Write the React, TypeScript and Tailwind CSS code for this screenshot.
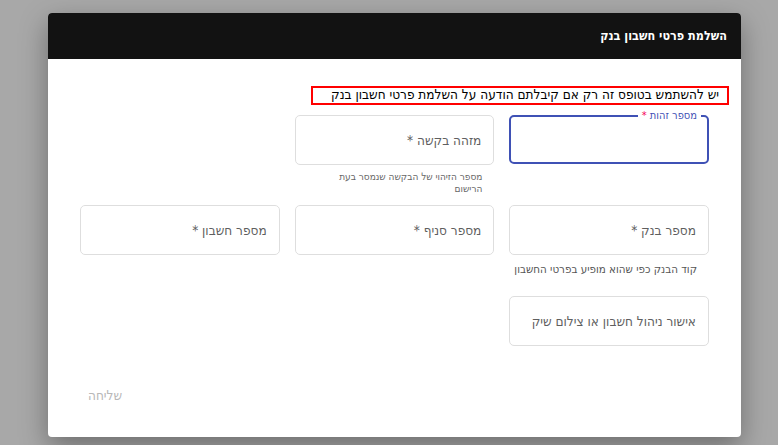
const COND = { fontFamily: '"DejaVu Sans Condensed", "Liberation Sans", sans-serif' };

type FieldProps = {
  label: string;
  helper?: string;
  wrapHelper?: boolean;
};

function IdField() {
  return (
    <div className="relative h-[49px] rounded-[5px] border-2 border-[#3f51b5]">
      <span
        style={COND}
        className="absolute -top-[8px] right-[6px] bg-white px-[4px] text-[11px] leading-[13px] text-[#3f51b5]"
      >
        מספר זהות <span className="text-[#f50057]">*</span>
      </span>
    </div>
  );
}

function Field({ label, helper, wrapHelper }: FieldProps) {
  return (
    <div className="flex flex-col">
      <div
        style={COND}
        className="flex h-[50px] items-center whitespace-nowrap rounded-[5px] border border-[#dedede] px-[12px] text-[13.5px] text-[#5f5f5f]"
      >
        {label}
      </div>
      {helper && (
        <p
          style={COND}
          className={
            wrapHelper
              ? "mt-[6px] pl-[36px] pr-[12px] text-[10px] leading-[12px] text-[#666]"
              : "mt-[8px] whitespace-nowrap pr-[12px] text-[11.5px] leading-[12px] text-[#555]"
          }
        >
          {helper}
        </p>
      )}
    </div>
  );
}

export default function App() {
  return (
    <div dir="rtl" className="flex h-[445px] w-[778px] overflow-hidden bg-[#a8a8a8] pt-[13px]">
      <div className="mr-[37px] flex h-[424px] w-[693px] flex-col overflow-hidden rounded-[4px] bg-white shadow-[0_10px_28px_rgba(0,0,0,0.35)]">
        <div className="flex h-[46px] shrink-0 items-center bg-[#121212] px-[14px]">
          <h2 style={COND} className="text-[12.5px] font-bold text-white">
            השלמת פרטי חשבון בנק
          </h2>
        </div>
        <div className="flex flex-1 flex-col px-[32px] pt-[27px]">
          <div
            style={COND}
            className="mr-[-20px] h-[19px] w-[418px] whitespace-nowrap border-[2.5px] border-[#ff0000] px-[8px] text-[13.5px] leading-[13px] text-black"
          >
            יש להשתמש בטופס זה רק אם קיבלתם הודעה על השלמת פרטי חשבון בנק
          </div>
          <div className="mt-[10px] grid grid-cols-3 gap-x-[15px]">
            <IdField />
            <Field label="מזהה בקשה *" helper="מספר הזיהוי של הבקשה שנמסר בעת הרישום" wrapHelper />
            <div />
          </div>
          <div className="mt-[10px] grid grid-cols-3 gap-x-[15px]">
            <Field label="מספר בנק *" helper="קוד הבנק כפי שהוא מופיע בפרטי החשבון" />
            <Field label="מספר סניף *" />
            <Field label="מספר חשבון *" />
          </div>
          <div className="mt-[21px] grid grid-cols-3 gap-x-[15px]">
            <Field label="אישור ניהול חשבון או צילום שיק" />
          </div>
          <div className="mt-[33px] flex justify-end">
            <button
              disabled
              style={COND}
              className="px-[8px] py-[6px] text-[13.5px] leading-[20px] text-[#b8b8b8]"
            >
              שליחה
            </button>
          </div>
        </div>
      </div>
    </div>
  );
}
